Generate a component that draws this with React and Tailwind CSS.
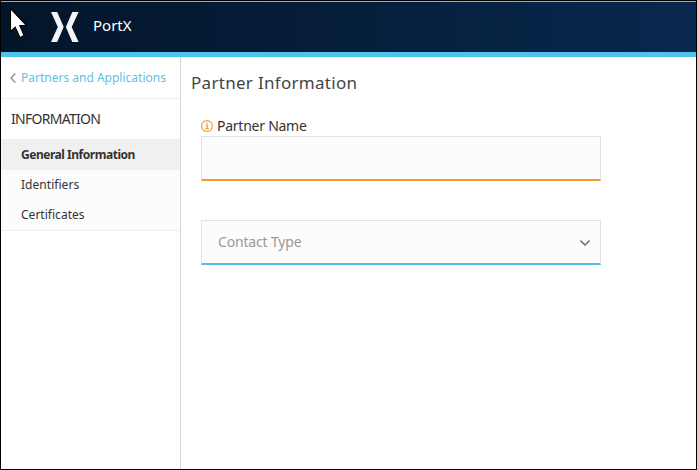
const navItems = [
  { label: 'General Information', active: true, tracking: 'tracking-[-0.47px]' },
  { label: 'Identifiers', tracking: 'tracking-[0.04px]' },
  { label: 'Certificates', tracking: 'tracking-[0.02px]' },
];

function Logo() {
  return (
    <svg width="28" height="30" viewBox="0 0 28 30" fill="#f3f5f8" className="shrink-0">
      <path d="M0 0H6.2L12.7 15L6.2 30H0L6.8 15Z" />
      <path d="M27.6 0H21.3L14.9 15L21.3 30H27.6L20.7 15Z" />
    </svg>
  );
}

function Cursor() {
  return (
    <svg width="20" height="32" viewBox="0 0 20 32" className="absolute left-[9px] top-[7px]">
      <path d="M0.5 0.5V23.5L5.2 19.2L10 29.5L14 27.5L9.8 17.5H16.5Z" fill="#fff" stroke="#000" strokeWidth="1.1" />
    </svg>
  );
}

export default function App() {
  return (
    <div className="relative flex h-[470px] w-[697px] flex-col overflow-hidden border border-black bg-white font-['Noto_Sans',sans-serif] text-[#333]">
      <header className="flex h-[56px] shrink-0 items-start border-b-[5px] border-t border-b-[#50c3e8] border-t-[#a3a6b2] bg-linear-to-r from-[#03152a] to-[#09284e] pl-[50px] pt-[10px]">
        <Logo />
        <span className="ml-[14px] mt-[3px] text-[15px] leading-[20px] text-white">PortX</span>
      </header>
      <div className="flex min-h-0 flex-1">
        <aside className="w-[180px] shrink-0 whitespace-nowrap border-r border-[#d7d7d7]">
          <a className="flex h-[42px] items-center border-b border-[#ededed] pl-[9px] text-[12px] text-[#62bfe3]">
            <svg width="6" height="10" viewBox="0 0 6 10" fill="none" stroke="#999" strokeWidth="1.6" className="mr-[5px]">
              <path d="M5.3 .5L1 5L5.3 9.5" />
            </svg>
            <span>Partners and Applications</span>
          </a>
          <h2 className="flex h-[40px] items-center pb-[2px] pl-[10px] text-[14px] tracking-[-0.72px]">INFORMATION</h2>
          <nav className="border-b border-[#ededed] bg-[#fcfcfc] text-[12px]">
            {navItems.map((item) => (
              <a
                key={item.label}
                className={`flex items-center pl-[20px] ${item.tracking} ${item.active ? 'h-[31px] bg-[#f1f0f0] font-bold' : 'h-[30px]'}`}
              >
                {item.label}
              </a>
            ))}
          </nav>
        </aside>
        <main className="flex-1 pl-[10px] pt-[13px]">
          <h1 className="text-[17px] leading-[26px] tracking-[0.3px] text-[#444]">Partner Information</h1>
          <form className="ml-[10px] mt-[20px] w-[400px]">
            <label className="flex h-[20px] items-center gap-[4px] text-[14px] text-[#333]">
              <svg width="12" height="12" viewBox="0 0 12 12" fill="none" stroke="#f39a35">
                <circle cx="6" cy="6" r="5.4" strokeWidth="1.1" />
                <path d="M4.6 5.2H6.2V8.7M4.4 8.7H7.8M5.4 3.1H6.7" strokeWidth="1.2" />
              </svg>
              <span className="leading-[18px] tracking-[-0.25px]">Partner Name</span>
            </label>
            <div className="h-[45px] border border-b-2 border-[#e2e2e2] border-b-[#f39a35] bg-[#fcfcfc]" />
            <div className="mt-[39px] flex h-[45px] items-center justify-between border border-b-2 border-[#e2e2e2] border-b-[#4ec2e8] bg-[#fcfcfc] pl-[16px] pr-[10px] text-[14px] text-[#999]">
              <span className="pb-[2px] tracking-[-0.17px]">Contact Type</span>
              <svg width="10" height="6" viewBox="0 0 10 6" fill="none" stroke="#777" strokeWidth="1.6" className="mt-[2px]">
                <path d="M.5 .6L5 5L9.5 .6" />
              </svg>
            </div>
          </form>
        </main>
      </div>
      <Cursor />
    </div>
  );
}
